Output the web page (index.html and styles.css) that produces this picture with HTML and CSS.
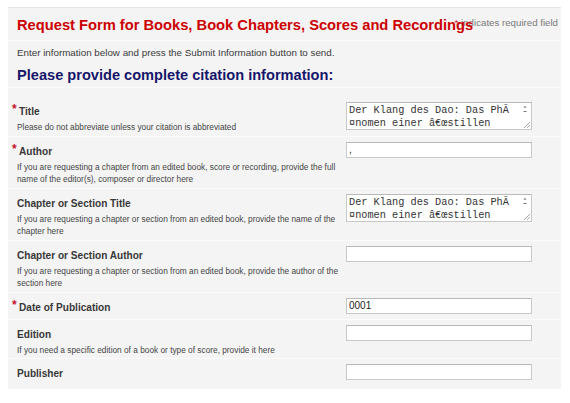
FILE: index.html
```html
<!DOCTYPE html>
<html lang="en">
<head>
<meta charset="utf-8">
<title>Request Form</title>
<link rel="stylesheet" href="styles.css">
</head>
<body>
<div class="panel">
  <div class="head">
    <h1 class="title">Request Form for Books, Book Chapters, Scores and Recordings</h1>
    <span class="req-note"><span class="note-star">*</span> indicates required field</span>
  </div>
  <p class="intro">Enter information below and press the Submit Information button to send.</p>
  <h2 class="section">Please provide complete citation information:</h2>

  <div class="row row-first">
    <div class="label-col">
      <label class="label"><span class="star">*</span>Title</label>
      <p class="help">Please do not abbreviate unless your citation is abbreviated</p>
    </div>
    <div class="ta-wrap">
      <textarea class="ta">Der Klang des Dao: Das PhÃ
¤nomen einer â€œstillen</textarea>
      <svg class="ta-bar" width="12" height="26" viewBox="0 0 12 26">
        <path d="M4.5 4.5 L6 3 L7.5 4.5 Z" fill="#555"/>
        <path d="M4.5 8.5 H7.5" stroke="#777" stroke-width="1"/>
        <path d="M11 19 L5 25 M11 22 L8 25" stroke="#aaa" stroke-width="1"/>
      </svg>
    </div>
  </div>

  <div class="row">
    <div class="label-col">
      <label class="label"><span class="star">*</span>Author</label>
      <p class="help">If you are requesting a chapter from an edited book, score or recording, provide the full name of the editor(s), composer or director here</p>
    </div>
    <input class="inp" type="text" value=",">
  </div>

  <div class="row">
    <div class="label-col">
      <label class="label">Chapter or Section Title</label>
      <p class="help">If you are requesting a chapter or section from an edited book, provide the name of the chapter here</p>
    </div>
    <div class="ta-wrap">
      <textarea class="ta">Der Klang des Dao: Das PhÃ
¤nomen einer â€œstillen</textarea>
      <svg class="ta-bar" width="12" height="26" viewBox="0 0 12 26">
        <path d="M4.5 4.5 L6 3 L7.5 4.5 Z" fill="#555"/>
        <path d="M4.5 8.5 H7.5" stroke="#777" stroke-width="1"/>
        <path d="M11 19 L5 25 M11 22 L8 25" stroke="#aaa" stroke-width="1"/>
      </svg>
    </div>
  </div>

  <div class="row">
    <div class="label-col">
      <label class="label">Chapter or Section Author</label>
      <p class="help">If you are requesting a chapter or section from an edited book, provide the author of the section here</p>
    </div>
    <input class="inp" type="text" value="">
  </div>

  <div class="row">
    <div class="label-col">
      <label class="label"><span class="star">*</span>Date of Publication</label>
    </div>
    <input class="inp" type="text" value="0001">
  </div>

  <div class="row">
    <div class="label-col">
      <label class="label">Edition</label>
      <p class="help">If you need a specific edition of a book or type of score, provide it here</p>
    </div>
    <input class="inp" type="text" value="">
  </div>

  <div class="row">
    <div class="label-col">
      <label class="label">Publisher</label>
    </div>
    <input class="inp" type="text" value="">
  </div>
</div>
</body>
</html>
```

FILE: styles.css
```css
html, body {
  margin: 0;
  padding: 0;
  background: #ffffff;
}

body {
  font-family: "Liberation Sans", Arial, sans-serif;
  color: #333333;
}

.panel {
  margin: 7px 9px 0 8px;
  background: #f4f4f4;
  border-top: 1px solid #e6e6e6;
  padding-bottom: 4px;
}

.head {
  position: relative;
  padding: 7px 9px 5px;
  border-bottom: 1px solid #fbfbfb;
}

.title {
  position: relative;
  z-index: 1;
  margin: 0;
  font-size: 14.7px;
  line-height: 20px;
  font-weight: bold;
  color: #cc0000;
  white-space: nowrap;
}

.req-note {
  position: absolute;
  right: 3px;
  top: 9px;
  font-size: 9.7px;
  line-height: 12px;
  color: #7a7a7a;
  white-space: nowrap;
}

.note-star {
  color: #c41230;
}

.intro {
  margin: 5px 9px 0;
  font-size: 9.8px;
  line-height: 14px;
  color: #3a3a3a;
}

.section {
  margin: 6px 9px 0;
  padding-bottom: 3px;
  font-size: 14.6px;
  line-height: 18px;
  font-weight: bold;
  color: #16166a;
}

.row {
  display: grid;
  grid-template-columns: 323px 186px;
  column-gap: 6px;
  align-items: start;
  padding: 5px 9px 2px;
  border-top: 1px solid #fbfbfb;
}

.row-first {
  padding-top: 14px;
}

.label-col {
  padding-top: 3px;
}

.label {
  display: block;
  font-size: 10.1px;
  line-height: 14px;
  font-weight: bold;
  color: #383838;
}

.star {
  display: inline-block;
  margin-left: -5px;
  width: 7px;
  font-size: 12px;
  line-height: 0;
  vertical-align: 2px;
  color: #c41230;
}

.help {
  margin: 2px 0 0;
  font-size: 8.3px;
  line-height: 12.5px;
  color: #444444;
}

.inp {
  display: block;
  box-sizing: border-box;
  width: 186px;
  height: 16px;
  margin: 0 0 3px;
  padding: 0 2px;
  border: 1px solid #c8c8c8;
  border-top-color: #b9b9b9;
  background: #ffffff;
  font-family: "Liberation Sans", Arial, sans-serif;
  font-size: 10px;
  color: #222222;
  outline: none;
}

.ta-wrap {
  position: relative;
  width: 186px;
  height: 28px;
}

.ta {
  display: block;
  box-sizing: border-box;
  width: 186px;
  height: 28px;
  margin: 0;
  padding: 1px 14px 0 2px;
  border: 1px solid #c8c8c8;
  border-top-color: #b9b9b9;
  background: #ffffff;
  font-family: "Liberation Mono", "Courier New", monospace;
  font-size: 10.25px;
  line-height: 13px;
  color: #333333;
  overflow: hidden;
  resize: none;
  white-space: pre;
  outline: none;
}

.ta-bar {
  position: absolute;
  right: 1px;
  top: 1px;
}
```
